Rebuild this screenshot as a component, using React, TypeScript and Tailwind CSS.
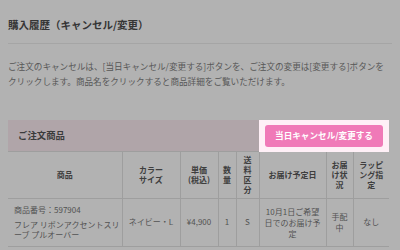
const font = { fontFamily: '"Noto Sans CJK JP", "Noto Sans", sans-serif' };

type Col = { label: React.ReactNode; width: string };

const cols: Col[] = [
  { label: "商品", width: "w-[114px] px-[4px]" },
  {
    label: (
      <>
        カラー
        <br />
        サイズ
      </>
    ),
    width: "w-[58px] px-[4px]",
  },
  {
    label: (
      <>
        単価
        <br />
        (税込)
      </>
    ),
    width: "w-[38px] px-[4px]",
  },
  { label: "数量", width: "w-[18px] px-[1px]" },
  { label: "送料区分", width: "w-[23px] px-[4px]" },
  { label: "お届け予定日", width: "w-[67px] px-[4px]" },
  { label: "お届け状況", width: "w-[27px] px-[4px]" },
  {
    label: (
      <>
        ラッピ
        <br />
        ング指
        <br />定
      </>
    ),
    width: "w-[36px] px-[2px]",
  },
];

export default function App() {
  return (
    <div className="min-h-[250px] w-[400px] bg-white px-2 text-[#555]" style={font}>
      <h1 className="border-b border-[#ececec] pt-[17px] pb-[10px] text-[10.5px] font-bold leading-[16px] text-[#4d4d4d]">
        購入履歴（キャンセル/変更）
      </h1>

      <p className="mt-[15px] w-[384px] text-[8.6px] leading-[15px] text-[#808080]">
        ご注文のキャンセルは、[当日キャンセル/変更する]ボタンを、ご注文の変更は[変更する]ボタンをクリックします。商品名をクリックすると商品詳細をご覧いただけます。
      </p>

      <div className="mt-[31px] w-[381px]">
        <div className="flex h-[32px] items-center justify-between border-b border-[#e2e2e2] bg-[#fcedf2] pl-[10px]">
          <span className="text-[9.4px] font-bold text-[#555]">ご注文商品</span>
          <div className="relative z-10 flex h-[32px] w-[130px] items-center justify-center bg-[#fff0f7]">
            <button className="h-[22px] w-[118px] rounded-[3px] bg-[#f07ab8] text-[8.6px] font-bold text-white">
              当日キャンセル/変更する
            </button>
          </div>
        </div>

        <table className="w-[381px] table-fixed border-collapse text-center">
          <thead>
            <tr className="h-[46px] border-b border-[#e2e2e2]">
              {cols.map((c, i) => (
                <th
                  key={i}
                  className={`${c.width} border-r border-[#e2e2e2] text-[8px] font-bold leading-[10px] text-[#5a5a5a] last:border-r-0`}
                >
                  {c.label}
                </th>
              ))}
            </tr>
          </thead>
          <tbody className="text-[8px] leading-[10px] text-[#777]">
            <tr className="h-[48px] border-b border-[#e2e2e2]">
              <td className="border-r border-[#e2e2e2] pl-[6px] text-left">
                <div className="mb-[5px]">商品番号：597904</div>
                <div>フレア リボンアクセントスリーブ プルオーバー</div>
              </td>
              <td className="border-r border-[#e2e2e2]">ネイビー・L</td>
              <td className="border-r border-[#e2e2e2]">¥4,900</td>
              <td className="border-r border-[#e2e2e2]">1</td>
              <td className="border-r border-[#e2e2e2]">S</td>
              <td className="border-r border-[#e2e2e2] px-[4px] leading-[11px]">10月1日ご希望日でのお届け予定</td>
              <td className="border-r border-[#e2e2e2] px-[5px] leading-[11px]">手配中</td>
              <td>なし</td>
            </tr>
          </tbody>
        </table>
      </div>

      <div className="fixed inset-0 z-[5] bg-black/30" />
    </div>
  );
}
